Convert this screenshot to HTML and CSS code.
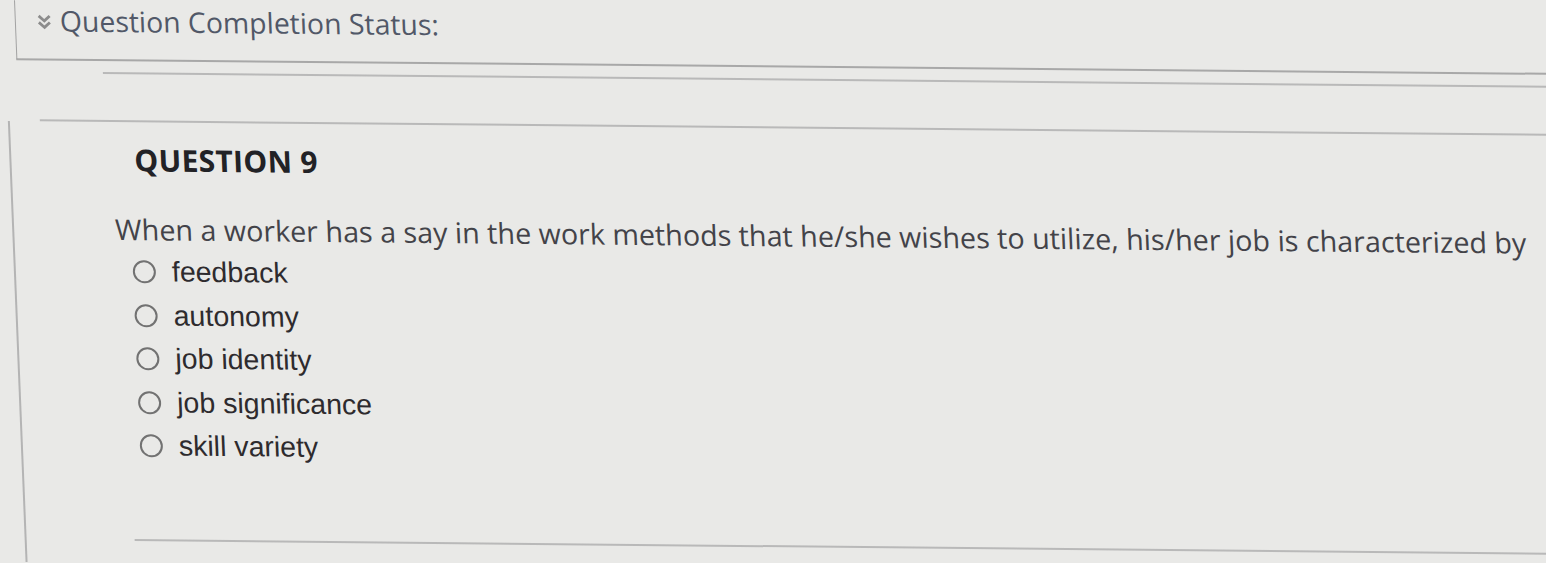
FILE: index.html
```html
<!DOCTYPE html>
<html>
<head>
<meta charset="utf-8">
<link rel="stylesheet" href="styles.css">
</head>
<body>
<div class="page">
  <div class="status-box">
    <svg class="chev" width="15" height="17" viewBox="0 0 15 17">
      <path d="M2 2.5 L7.5 7.5 L13 2.5" fill="none" stroke="#8c8c8c" stroke-width="2.8"/>
      <path d="M2 9 L7.5 14 L13 9" fill="none" stroke="#8c8c8c" stroke-width="2.8"/>
    </svg>
    <span class="status-text">Question Completion Status:</span>
  </div>
  <div class="rule rule-a"></div>
  <div class="rule rule-b"></div>
  <div class="content">
    <h2 class="q-title">QUESTION 9</h2>
    <p class="q-text">When a worker has a say in the work methods that he/she wishes to utilize, his/her job is characterized by</p>
    <ul class="options">
      <li class="opt"><span class="radio"></span><span class="label">feedback</span></li>
      <li class="opt"><span class="radio"></span><span class="label">autonomy</span></li>
      <li class="opt"><span class="radio"></span><span class="label">job identity</span></li>
      <li class="opt"><span class="radio"></span><span class="label">job significance</span></li>
      <li class="opt"><span class="radio"></span><span class="label">skill variety</span></li>
    </ul>
    <div class="rule rule-c"></div>
  </div>
</div>
</body>
</html>
```
FILE: styles.css
```css
html, body {
  margin: 0;
  padding: 0;
}
body {
  background: #e9e9e7;
  width: 1546px;
  height: 563px;
  overflow: hidden;
}
/* the reference is a photo of a screen: a slight tilt of the whole page */
.page {
  display: flex;
  flex-direction: column;
  width: 1600px;
  transform-origin: 0 0;
  transform: skew(2.3deg, 0.55deg);
}
.status-box {
  margin-left: 14px;
  height: 60px;
  border-left: 1px solid #a2a2a2;
  border-bottom: 2px solid #a8a8a8;
  display: flex;
  align-items: flex-start;
  padding-left: 21px;
  box-sizing: border-box;
}
.chev {
  margin-top: 13px;
  margin-right: 8px;
}
.status-text {
  font-family: "Open Sans", sans-serif;
  font-size: 28.4px;
  color: #515868;
  line-height: 40px;
}
.rule {
  border-top: 2px solid #b9b9b9;
}
.rule-a {
  margin-left: 100px;
  margin-top: 11px;
}
.rule-b {
  margin-left: 35px;
  margin-top: 46px;
}
.content {
  margin-left: 3px;
  border-left: 2px solid #b4b4b4;
  height: 441px;
}
.q-title {
  margin: 18px 0 0 123px;
  font-family: "Open Sans", sans-serif;
  font-weight: 700;
  font-size: 30px;
  line-height: 40px;
  color: #222226;
  letter-spacing: 0.3px;
}
.q-text {
  margin: 29px 0 0 101px;
  font-family: "Open Sans", sans-serif;
  font-size: 28.7px;
  line-height: 40px;
  color: #434349;
  white-space: nowrap;
}
.options {
  list-style: none;
  margin: 1px 0 0 117px;
  padding: 0;
  display: flex;
  flex-direction: column;
}
.opt {
  display: flex;
  align-items: center;
  height: 43.5px;
}
.radio {
  width: 19px;
  height: 19px;
  border: 2px solid #727272;
  border-radius: 50%;
  margin-right: 16px;
}
.label {
  font-family: "Liberation Sans", Arial, sans-serif;
  font-size: 28.5px;
  color: #2e2b2e;
}
.rule-c {
  margin-left: 108px;
  margin-top: 71px;
}
```
